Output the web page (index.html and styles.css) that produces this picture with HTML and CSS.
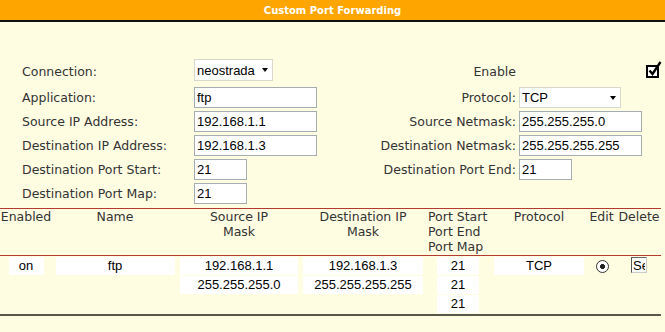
FILE: index.html
```html
<!DOCTYPE html>
<html lang="en">
<head>
  <meta charset="UTF-8">
  <title>Custom Port Forwarding</title>
  <link rel="stylesheet" href="styles.css">
</head>
<body>

<div class="titlebar">Custom Port Forwarding</div>

<!-- rule form -->
<div class="form">
  <div class="label">Connection:</div>
  <div class="ctrl first">
    <span class="select-wrap conn"><select><option>neostrada</option></select></span>
  </div>
  <div class="label right">Enable</div>
  <div class="ctrl check">
    <svg width="17" height="17" viewBox="0 0 17 17">
      <rect x="1" y="5" width="11" height="11" fill="#fff" stroke="#000" stroke-width="2"/>
      <path d="M3.5 9.5 L6.5 13 L14.5 1" fill="none" stroke="#000" stroke-width="2.4"/>
    </svg>
  </div>

  <div class="label">Application:</div>
  <div class="ctrl"><input class="wide" type="text" value="ftp"></div>
  <div class="label right">Protocol:</div>
  <div class="ctrl">
    <span class="select-wrap proto"><select><option>TCP</option></select></span>
  </div>

  <div class="label">Source IP Address:</div>
  <div class="ctrl"><input class="wide" type="text" value="192.168.1.1"></div>
  <div class="label right">Source Netmask:</div>
  <div class="ctrl"><input class="wide" type="text" value="255.255.255.0"></div>

  <div class="label">Destination IP Address:</div>
  <div class="ctrl"><input class="wide" type="text" value="192.168.1.3"></div>
  <div class="label right">Destination Netmask:</div>
  <div class="ctrl"><input class="wide" type="text" value="255.255.255.255"></div>

  <div class="label">Destination Port Start:</div>
  <div class="ctrl"><input class="short" type="text" value="21"></div>
  <div class="label right">Destination Port End:</div>
  <div class="ctrl"><input class="short" type="text" value="21"></div>

  <div class="label">Destination Port Map:</div>
  <div class="ctrl"><input class="short" type="text" value="21"></div>
  <div></div>
  <div></div>
</div>

<!-- rules list -->
<div class="list">
  <div class="list-head">
    <div>Enabled</div>
    <div>Name</div>
    <div>Source IP<br>Mask</div>
    <div>Destination IP<br>Mask</div>
    <div class="left">Port Start<br>Port End<br>Port Map</div>
    <div>Protocol</div>
    <div>Edit</div>
    <div>Delete</div>
  </div>
  <div class="list-row">
    <div class="stack"><div class="cell" style="width:35px">on</div></div>
    <div class="stack"><div class="cell" style="width:119px">ftp</div></div>
    <div class="stack">
      <div class="cell" style="width:118px">192.168.1.1</div>
      <div class="cell" style="width:118px">255.255.255.0</div>
    </div>
    <div class="stack">
      <div class="cell" style="width:120px">192.168.1.3</div>
      <div class="cell" style="width:120px">255.255.255.255</div>
    </div>
    <div class="stack">
      <div class="cell" style="width:42px">21</div>
      <div class="cell" style="width:42px">21</div>
      <div class="cell" style="width:42px">21</div>
    </div>
    <div class="stack"><div class="cell" style="width:90px">TCP</div></div>
    <div class="stack"><span class="radio"></span></div>
    <div class="stack"><input class="del" type="text" value="Select" readonly></div>
  </div>
</div>

</body>
</html>
```

FILE: styles.css
```css
body {
  margin: 0;
  background-color: #fffde1;
  font-family: "DejaVu Sans", Verdana, sans-serif;
  font-size: 12.5px;
  color: #333;
}

.titlebar {
  height: 20px;
  line-height: 21px;
  background-color: #ffa500;
  border-bottom: 2px solid #111;
  color: #fff;
  font-weight: bold;
  font-size: 10px;
  text-align: center;
}

.form {
  display: grid;
  grid-template-columns: 172px 150px 172px 1fr;
  row-gap: 3px;
  align-items: center;
  padding: 37px 0 0 22px;
}

.label.right {
  text-align: right;
}

.ctrl {
  display: flex;
  height: 21px;
  align-items: center;
}

.ctrl.first {
  height: 22px;
  margin-bottom: 3px;
}

.form .label + .ctrl {
  padding-left: 0;
}

.label.right + .ctrl {
  padding-left: 3px;
}

.ctrl.check {
  justify-content: flex-end;
  padding-right: 2px;
}

.ctrl.check svg {
  margin-top: -4px;
}

input {
  box-sizing: border-box;
  height: 21px;
  border: 1px solid #a5acb2;
  background-color: #fff;
  padding: 0 2px;
  margin: 0;
  font-family: "Liberation Sans", Arial, sans-serif;
  font-size: 13px;
  color: #000;
}

input.wide {
  width: 123px;
}

input.short {
  width: 53px;
}

.select-wrap {
  position: relative;
  display: inline-block;
}

.select-wrap select {
  appearance: none;
  box-sizing: border-box;
  height: 21px;
  margin: 0;
  padding: 0 2px;
  border: 1px solid #d8d8cc;
  background-color: #fff;
  font-family: "Liberation Sans", Arial, sans-serif;
  font-size: 13px;
  color: #000;
}

.select-wrap.conn select {
  width: 79px;
  height: 22px;
}

.select-wrap.proto select {
  width: 102px;
}

/* little dropdown arrow */
.select-wrap::after {
  content: "";
  position: absolute;
  right: 5px;
  top: 9px;
  border-left: 3.5px solid transparent;
  border-right: 3.5px solid transparent;
  border-top: 4px solid #000;
}

.list {
  width: 661px;
  margin-top: 4px;
  border-top: 1px solid #b53a2e;
  border-bottom: 2px solid #57574a;
}

.list-head,
.list-row {
  display: grid;
  grid-template-columns: 52px 126px 122px 126px 64px 98px 27px 48px;
}

.list-head {
  height: 46px;
  line-height: 15px;
  text-align: center;
  border-bottom: 1px solid #b53a2e;
}

.list-head .left {
  text-align: left;
  padding-left: 2px;
}

.list-row {
  height: 58px;
  padding-top: 1px;
  box-sizing: border-box;
}

.stack {
  display: flex;
  flex-direction: column;
  align-items: center;
  gap: 1px;
}

.cell {
  height: 18px;
  line-height: 18px;
  background-color: #fff;
  font-family: "Liberation Sans", Arial, sans-serif;
  font-size: 13px;
  color: #000;
  text-align: center;
}

.radio {
  box-sizing: border-box;
  width: 13px;
  height: 13px;
  margin: 3px 0 0 2px;
  border: 1.5px solid #333;
  border-radius: 50%;
  background: radial-gradient(circle, #222 0 2.2px, #fff 2.8px);
}

input.del {
  width: 16px;
  height: 16px;
  padding: 0 1px;
  border-color: #666 #ccc #ccc #555;
  overflow: hidden;
}
```
